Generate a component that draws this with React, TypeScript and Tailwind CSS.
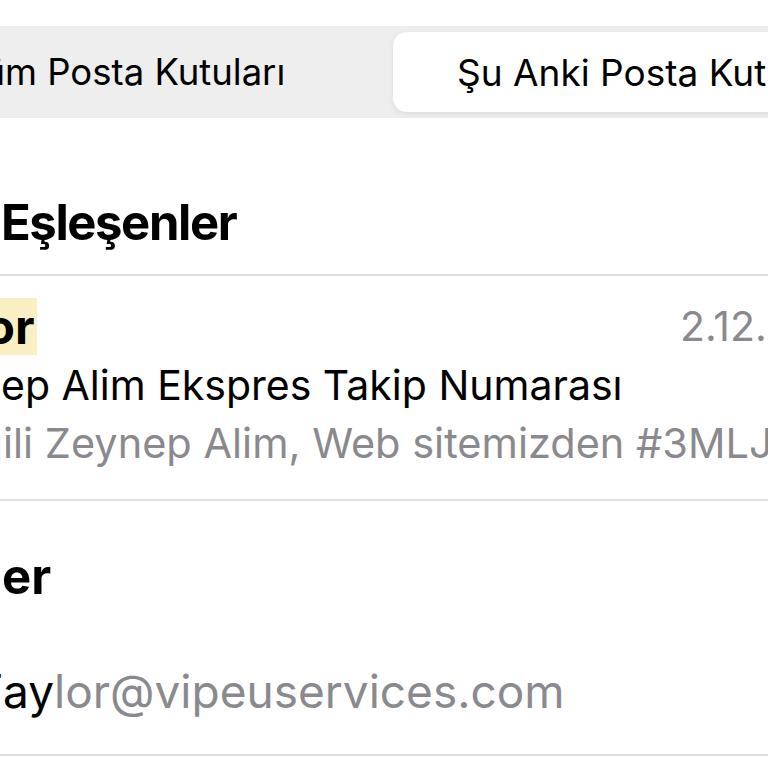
import React from "react";

// Hidden-to-the-left text: a zero-width flex box whose content overflows to the left.
const Lead = ({ text, className = "" }: { text: string; className?: string }) => (
  <span className="flex w-0 shrink-0 justify-end whitespace-nowrap">
    <span className={className}>{text}</span>
  </span>
);

const Divider = () => <div className="h-[2px] w-full bg-[#dedee0]" />;

export default function App() {
  return (
    <div
      className="h-[768px] w-[768px] overflow-hidden bg-white text-black"
      style={{ fontFamily: "Inter, 'Noto Sans', sans-serif" }}
    >
      <div className="h-[26px]" />

      {/* Segmented control */}
      <div className="flex h-[92px] items-center bg-[#eeeeef]">
        <div className="flex w-[393px] shrink-0 items-center whitespace-nowrap pl-[5px] text-[36.5px] leading-none">
          <Lead text="Tü" />
          <span>m Posta Kutuları</span>
        </div>
        <div className="flex h-[80px] w-[420px] shrink-0 items-center whitespace-nowrap rounded-[14px] bg-white pl-[64px] text-[37px] leading-none shadow-[0_2px_6px_rgba(0,0,0,0.08)]">
          Şu Anki Posta Kutusu
        </div>
      </div>

      {/* Top hits */}
      <div className="flex h-[156px] items-end pb-[27px] pl-[1px] text-[49px] font-bold leading-none tracking-[-1.4px]">
        <Lead text="En İyi " />
        <span className="whitespace-nowrap">Eşleşenler</span>
      </div>
      <Divider />

      {/* Message row */}
      <div className="pb-[34px] pt-[22px]">
        <div className="flex h-[57px] items-center whitespace-nowrap text-[48px] font-bold leading-[57px]">
          <div className="flex w-[680px] shrink-0 items-center pl-[15px]">
            <Lead text="Jessica Taylo" className="bg-[#faefc2]" />
            <span className="bg-[#faefc2] pr-[2px]">r</span>
          </div>
          <span className="text-[41px] font-normal text-[#8a8a8e]">2.12.2019</span>
        </div>
        <div className="mt-[10px] flex whitespace-nowrap pl-[1px] text-[41px] leading-none">
          <Lead text="Zeyn" />
          <span>ep Alim Ekspres Takip Numarası</span>
        </div>
        <div className="mt-[17px] flex whitespace-nowrap pl-[3px] text-[41.5px] leading-none text-[#8a8a8e]">
          <Lead text="Sevg" />
          <span>ili Zeynep Alim, Web sitemizden #3MLJ4K siparişiniz</span>
        </div>
      </div>
      <Divider />

      {/* People */}
      <div className="flex pl-[2px] pt-[51px] text-[49px] font-bold leading-none">
        <Lead text="Kişil" className="pr-[10px]" />
        <span>er</span>
      </div>
      <div className="mt-[67px] flex whitespace-nowrap pb-[40px] pl-[3px] text-[46px] leading-none">
        <Lead text="T" />
        <span>ay</span>
        <span className="text-[#8a8a8e]">lor@vipeuservices.com</span>
      </div>
      <Divider />
    </div>
  );
}
